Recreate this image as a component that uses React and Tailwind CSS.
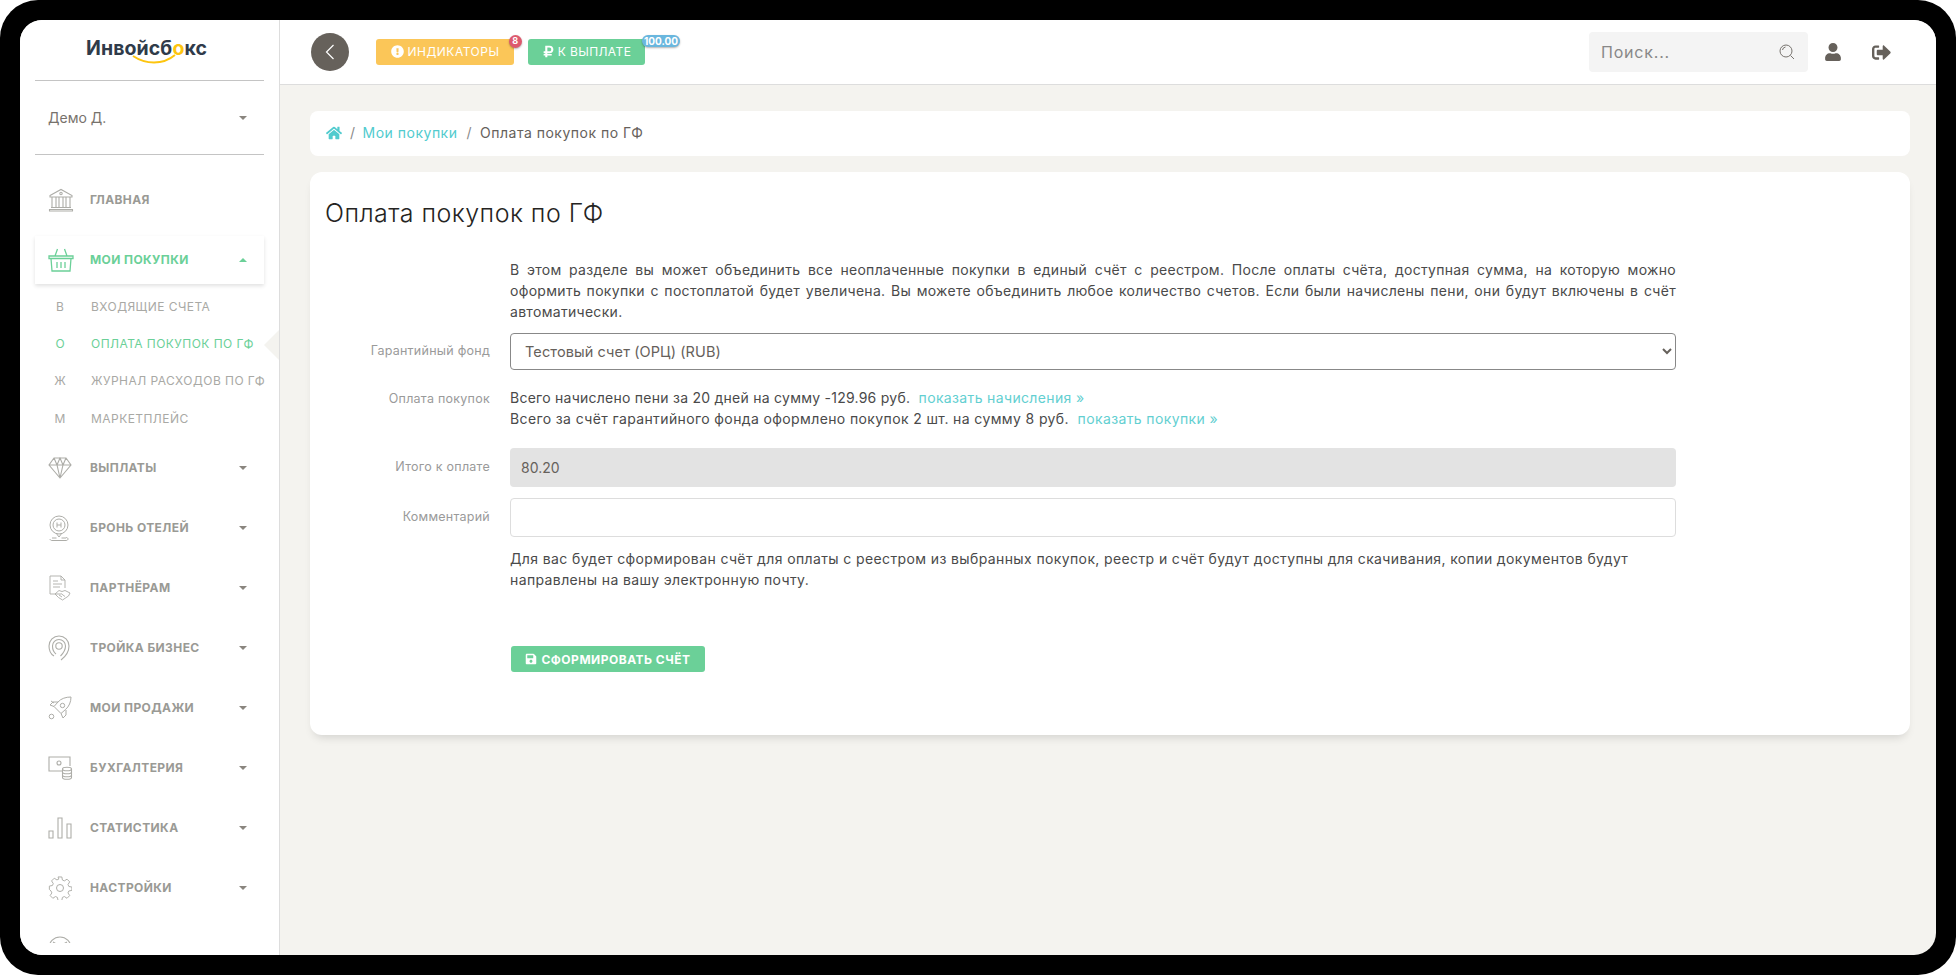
import React from 'react';
import { FaHome, FaUser, FaSignOutAlt, FaExclamationCircle, FaRubleSign, FaSave } from 'react-icons/fa';

const BankIcon = () => (
  <svg width="26" height="24" viewBox="0 0 26 24" fill="none" stroke="currentColor" strokeWidth="1.1">
    <path d="M2 7.500 13 1.500l11 6v1.500H2z" />
    <circle cx="13" cy="5.500" r="1.200" />
    <path d="M4 9v10M8 9v10M11 9v10M15 9v10M18 9v10M22 9v10M3 19.500h20M1.500 21.500h23v1.500h-23z" />
  </svg>
);

const BasketIcon = () => (
  <svg width="26" height="24" viewBox="0 0 26 24" fill="none" stroke="currentColor" strokeWidth="1.3">
    <path d="M1 8h24v2.500H1zM3 10.500 4 23h18l1-12.500M7 8l2.500-7M19 8l-2.500-7M9 14v6M13 14v6M17 14v6" />
  </svg>
);

const DiamondIcon = () => (
  <svg width="24" height="22" viewBox="0 0 24 22" fill="none" stroke="currentColor" strokeWidth="1.1">
    <path d="M6 1h12l5 7-11 13L1 8zM1 8h22M6 1l3 7 3 13 3-13 3-7M9 8l3-7 3 7" />
  </svg>
);

const HotelIcon = () => (
  <svg width="22" height="26" viewBox="0 0 22 26" fill="none" stroke="currentColor" strokeWidth="1">
    <circle cx="11" cy="10" r="9" />
    <circle cx="11" cy="10" r="6" />
    <path d="M9 7.500v5M13 7.500v5M9 10h4M8 18l3 4 3-4M4 23h4.500M13.500 23H18M2 24c0 1 1 1.500 2 1.500h14c1 0 2-.5 2-1.500s-1-1.500-2-1.500" />
  </svg>
);

const PartnerIcon = () => (
  <svg width="24" height="26" viewBox="0 0 24 26" fill="none" stroke="currentColor" strokeWidth="0.9">
    <path d="M13 19H2V1h11l4 4v8M13 1v4h4M5 6h5M5 9h9M5 12h7" />
    <path d="M7 19l4-3.500 3 1 3-1 5 2.500-1.500 3-6 4-4-2.500zM11 20l3 2M13 18.500l4 3" />
  </svg>
);

const TargetIcon = () => (
  <svg width="22" height="26" viewBox="0 0 22 26" fill="none" stroke="currentColor" strokeWidth="1.1">
    <path d="M6 21C2.500 19 1 15.500 1 11a10 10 0 0 1 20 0c0 5.500-3.500 10.500-8 14" />
    <path d="M8 19c-2-1.500-3.500-4.500-3.500-8a6.500 6.500 0 0 1 13 0c0 4-2.500 7.500-5 10" />
    <circle cx="11" cy="11" r="3.200" />
  </svg>
);

const RocketIcon = () => (
  <svg width="24" height="24" viewBox="0 0 24 24" fill="none" stroke="currentColor" strokeWidth="1">
    <path d="M23 1c-5 0-10 1.500-13 5l-4 4.500 7 7 4.500-4c3.500-3 5.500-7.500 5.500-12.500z" />
    <circle cx="14.500" cy="9.500" r="2.200" />
    <path d="M10 6H5L2 9l4 1.500M18 14v5l-3 3-2-4.500M3 5l3 2" />
    <circle cx="3.500" cy="20.500" r="2.300" />
  </svg>
);

const AccountingIcon = () => (
  <svg width="25" height="24" viewBox="0 0 25 24" fill="none" stroke="currentColor" strokeWidth="1.1">
    <path d="M14 15H1V1h21v9" />
    <circle cx="11" cy="7" r="2" />
    <ellipse cx="19" cy="13" rx="4.500" ry="1.800" />
    <path d="M14.500 13v8.500c0 1 2 1.800 4.500 1.800s4.500-.8 4.500-1.800V13M14.500 16c0 1 2 1.800 4.500 1.800s4.500-.8 4.500-1.800M14.500 19c0 1 2 1.800 4.500 1.800s4.500-.8 4.500-1.800" />
  </svg>
);

const StatsIcon = () => (
  <svg width="24" height="22" viewBox="0 0 24 22" fill="none" stroke="currentColor" strokeWidth="1.1">
    <path d="M1 14h4v7H1zM10 1h4v20h-4zM19 7h4v14h-4z" />
  </svg>
);

const GearIcon = () => (
  <svg width="24" height="24" viewBox="0 0 24 24" fill="none" stroke="currentColor" strokeWidth="1">
    <circle cx="12" cy="12" r="3.500" />
    <path d="M10 1h4l.6 3.200 2 .9 2.800-1.800 2.800 2.800-1.800 2.800.9 2 3.200.6v3.500l-3.200.6-.9 2 1.800 2.800-2.800 2.800-2.800-1.800-2 .9-.6 3.200h-4l-.6-3.200-2-.9-2.800 1.800-2.800-2.800 1.800-2.800-.9-2L1 14v-3.500l3.200-.6.9-2-1.800-2.800 2.800-2.800 2.800 1.800 2-.9z" transform="translate(0.4 0) scale(0.96)" />
  </svg>
);

const GaugeIcon = () => (
  <svg width="24" height="24" viewBox="0 0 24 24" fill="none" stroke="currentColor" strokeWidth="1.1">
    <circle cx="12" cy="12" r="11" />
    <path d="M5 6l7 4 7-4" />
  </svg>
);

const Caret = ({ up }) => (
  <span className={up ? 'w-0 h-0 border-x-[4px] border-x-transparent border-b-[4px] border-b-[#6bd098]' : 'w-0 h-0 border-x-[4px] border-x-transparent border-t-[4px] border-t-[#8a857f]'} />
);

const MenuRow = ({ icon: Icon, label, active, up, noCaret }) => (
  <div className={active ? 'flex items-center h-[48px] mb-0 pl-[13px] pr-[17px] text-[#6bd098] bg-white shadow-[0_2px_4px_rgba(0,0,0,0.12)]' : 'flex items-center h-[48px] mb-[12px] pl-[13px] pr-[17px] text-[#9a9a95]'}>
    <span className={active ? 'w-[42px] flex shrink-0 items-center' : 'w-[42px] flex shrink-0 items-center text-[#adada8]'}><Icon /></span>
    <span className="flex-1 text-[12px] font-bold tracking-[0.4px]">{label}</span>
    {!noCaret && <Caret up={up} />}
  </div>
);

const SubRow = ({ letter, label, active }) => (
  <div className={active ? 'relative flex items-center h-[37.300px] text-[#6bd098]' : 'relative flex items-center h-[37.300px] text-[#a9a9a5]'}>
    <span className="w-[56px] shrink-0 pl-[5px] pr-[11px] text-center text-[12px]">{letter}</span>
    <span className="text-[12px] tracking-[0.45px] whitespace-nowrap">{label}</span>
    {active && (
      <span className="absolute right-[-15px] top-[5px] w-0 h-0 border-y-[15px] border-y-transparent border-r-[15px] border-r-[#f4f3ef]" />
    )}
  </div>
);

const FormRow = ({ label, children, labelClass = '' }) => (
  <div className="flex gap-[20px]">
    <div className={`w-[165px] shrink-0 text-right text-[12.500px] tracking-[0.25px] text-[#9a9a9a] ${labelClass}`}>{label}</div>
    <div className="w-[1166px]">{children}</div>
  </div>
);

const App = () => {
  return (
    <div className="w-[1956px] h-[975px] bg-white" style={{ fontFamily: 'Inter, "Noto Sans", sans-serif' }}>
      <div className="w-full h-full bg-black rounded-[38px] p-[20px]">
        <div className="flex w-full h-full rounded-[22px] overflow-hidden bg-[#f4f3ef]">
          {/* sidebar */}
          <aside className="w-[260px] shrink-0 h-full bg-white border-r border-[#ddd] flex flex-col">
            <div className="mx-[15px] h-[61px] border-b border-[#c4c4c4] flex justify-center">
              <div className="relative h-[26px] mt-[16px] mr-[6px] text-[19.500px] leading-[24px] font-bold text-[#2f3b4a] tracking-[0.1px]">
                Инвойсб<span className="text-[#fdc50f]">о</span>кс
                <svg className="absolute left-[46px] top-[18px]" width="44" height="10" viewBox="0 0 44 10" fill="none" stroke="#fdc50f" strokeWidth="2">
                  <path d="M1 2c6 4 13 6.500 21 6.500S37 6 43 1" />
                </svg>
              </div>
            </div>
            <div className="mx-[15px] h-[74px] border-b border-[#c4c4c4] flex items-center pl-[13px] pr-[17px] text-[#77726c]">
              <span className="flex-1 text-[14px]">Демо Д.</span>
              <Caret />
            </div>
            <nav className="mt-[21px] px-[15px] h-[767px] overflow-hidden">
              <MenuRow icon={BankIcon} label="ГЛАВНАЯ" noCaret />
              <MenuRow icon={BasketIcon} label="МОИ ПОКУПКИ" active up />
              <div className="mt-[4px] mb-[7px]">
                <SubRow letter="В" label="ВХОДЯЩИЕ СЧЕТА" />
                <SubRow letter="О" label="ОПЛАТА ПОКУПОК ПО ГФ" active />
                <SubRow letter="Ж" label="ЖУРНАЛ РАСХОДОВ ПО ГФ" />
                <SubRow letter="М" label="МАРКЕТПЛЕЙС" />
              </div>
              <MenuRow icon={DiamondIcon} label="ВЫПЛАТЫ" />
              <MenuRow icon={HotelIcon} label="БРОНЬ ОТЕЛЕЙ" />
              <MenuRow icon={PartnerIcon} label="ПАРТНЁРАМ" />
              <MenuRow icon={TargetIcon} label="ТРОЙКА БИЗНЕС" />
              <MenuRow icon={RocketIcon} label="МОИ ПРОДАЖИ" />
              <MenuRow icon={AccountingIcon} label="БУХГАЛТЕРИЯ" />
              <MenuRow icon={StatsIcon} label="СТАТИСТИКА" />
              <MenuRow icon={GearIcon} label="НАСТРОЙКИ" />
              <MenuRow icon={GaugeIcon} label="" noCaret />
            </nav>
          </aside>

          <div className="flex-1 min-w-0 flex flex-col">
            {/* header */}
            <header className="h-[65px] shrink-0 bg-white border-b border-[#ddd] flex items-center pl-[31px]">
              <button className="w-[38px] h-[38px] rounded-full bg-[#66615b] flex items-center justify-center">
                <svg width="10" height="16" viewBox="0 0 10 16" fill="none" stroke="white" strokeWidth="1.200"><path d="M8.500 1 1.500 8l7 7" /></svg>
              </button>
              <div className="relative ml-[27px] w-[138px] h-[26px] bg-[#fbc658] rounded-[3px] flex items-center justify-center gap-[4px] text-white text-[12px] tracking-[0.5px] mt-[-1px]">
                <FaExclamationCircle className="text-[13px]" />
                <span>ИНДИКАТОРЫ</span>
                <span className="absolute right-[-8px] top-[-4px] w-[13px] h-[13px] rounded-full bg-[#dd5a6e] text-[9px] font-bold flex items-center justify-center shadow-[0_1px_2px_rgba(0,0,0,0.3)]">8</span>
              </div>
              <div className="relative ml-[14px] w-[117px] h-[26px] bg-[#6bd098] rounded-[3px] flex items-center justify-center gap-[3px] text-white text-[12px] tracking-[0.4px] mt-[-1px]">
                <FaRubleSign className="text-[13px]" />
                <span>К ВЫПЛАТЕ</span>
                <span className="absolute left-[114px] top-[-4px] w-[38px] h-[12px] rounded-full bg-[#6ab7de] text-[10px] tracking-normal leading-[12px] font-bold text-center shadow-[0_1px_2px_rgba(0,0,0,0.3)]">100.00</span>
              </div>
              <div className="ml-auto w-[219px] h-[40px] bg-[#f4f4f4] rounded-[4px] flex items-center pl-[12px] pr-[13px] text-[#888]">
                <span className="flex-1 text-[16px] tracking-[0.8px]">Поиск...</span>
                <svg width="16" height="16" viewBox="0 0 16 16" fill="none" stroke="#77736e" strokeWidth="1"><circle cx="7" cy="7" r="6" /><path d="M11.500 11.500 15 15M3.500 6a3.500 3.500 0 0 1 3-3" /></svg>
              </div>
              <FaUser className="ml-[16px] text-[#66615b] text-[18px]" />
              <FaSignOutAlt className="ml-[30px] mr-[45px] text-[#66615b] text-[19px]" />
            </header>

            {/* content */}
            <main className="pl-[30px] pr-[26px] pt-[26px]">
              <div className="h-[45px] bg-white rounded-[8px] flex items-center pl-[16px] pb-[2px] text-[14px] tracking-[0.5px] text-[#66615b]">
                <FaHome className="text-[#51cbce] text-[16px]" />
                <span className="ml-[8px] text-[#8a8a8a]">/</span>
                <span className="ml-[7px] text-[#51cbce]">Мои покупки</span>
                <span className="ml-[9px] text-[#8a8a8a]">/</span>
                <span className="ml-[8px]">Оплата покупок по ГФ</span>
              </div>

              <div className="mt-[16px] h-[563px] bg-white rounded-[12px] shadow-[0_6px_10px_-4px_rgba(0,0,0,0.15)] px-[15px] pt-[27px]">
                <h1 className="text-[25px] leading-[29px] font-light tracking-[0.45px] text-[#252422]">Оплата покупок по ГФ</h1>
                <div className="mt-[31px] text-[14px] leading-[21px] tracking-[0.3px] text-[#4a4a4a]">
                  <FormRow>
                    <p className="text-justify">
                      <span className="block [text-align-last:justify]">В этом разделе вы может объединить все неоплаченные покупки в единый счёт с реестром. После оплаты счёта, доступная сумма, на которую можно</span>
                      <span className="block [text-align-last:justify]">оформить покупки с постоплатой будет увеличена. Вы можете объединить любое количество счетов. Если были начислены пени, они будут включены в счёт</span>
                      <span className="block">автоматически.</span>
                    </p>
                  </FormRow>
                  <div className="mt-[11px]">
                    <FormRow label="Гарантийный фонд" labelClass="pt-[7px]">
                      <select className="w-full h-[37px] bg-white border border-[#888] rounded-[4px] pl-[10px] pr-[2px] text-[14.500px] tracking-[0.1px] text-[#66615b]">
                        <option>Тестовый счет (ОРЦ) (RUB)</option>
                      </select>
                    </FormRow>
                  </div>
                  <div className="mt-[17px]">
                    <FormRow label="Оплата покупок" labelClass="pt-[1px]">
                      <p className="tracking-[0.25px]">Всего начислено пени за 20 дней на сумму -129.96 руб.&nbsp; <a className="text-[#63cfd1] tracking-[0.35px]">показать начисления »</a></p>
                      <p className="tracking-[0.38px]">Всего за счёт гарантийного фонда оформлено покупок 2 шт. на сумму 8 руб.&nbsp; <a className="text-[#63cfd1]">показать покупки »</a></p>
                    </FormRow>
                  </div>
                  <div className="mt-[19px]">
                    <FormRow label="Итого к оплате" labelClass="pt-[8px]">
                      <input readOnly value="80.20" className="w-full h-[39px] bg-[#e3e3e3] rounded-[4px] px-[11px] text-[14px] tracking-normal text-[#66615b] outline-none" />
                    </FormRow>
                  </div>
                  <div className="mt-[11px]">
                    <FormRow label="Комментарий" labelClass="pt-[8px]">
                      <input className="w-full h-[39px] bg-white border border-[#ddd] rounded-[4px] px-[11px] text-[14px] outline-none" />
                    </FormRow>
                  </div>
                  <div className="mt-[11px]">
                    <FormRow>
                      <p className="tracking-[0.38px]">Для вас будет сформирован счёт для оплаты с реестром из выбранных покупок, реестр и счёт будут доступны для скачивания, копии документов будут направлены на вашу электронную почту.</p>
                    </FormRow>
                  </div>
                  <div className="mt-[56px]">
                    <FormRow>
                      <button className="ml-[1px] w-[194px] h-[26px] bg-[#6bd098] rounded-[3px] text-white text-[12px] tracking-[0.5px] font-bold flex items-center justify-center gap-[4px]">
                        <FaSave className="text-[12px]" />
                        СФОРМИРОВАТЬ СЧЁТ
                      </button>
                    </FormRow>
                  </div>
                </div>
              </div>
            </main>
          </div>
        </div>
      </div>
    </div>
  );
};

export default App;
